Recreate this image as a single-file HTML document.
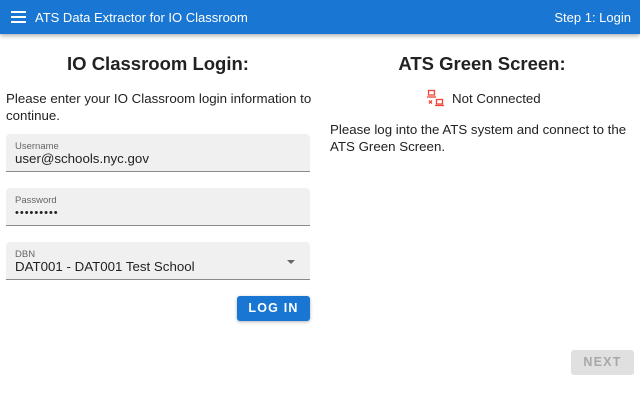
<!DOCTYPE html>
<html><head><style>
*{margin:0;padding:0;box-sizing:border-box}
body{width:640px;height:400px;background:#fff;font-family:"Liberation Sans",sans-serif;color:#222;position:relative;overflow:hidden}
.hdr{position:absolute;left:0;top:0;width:640px;height:34px;background:#1976d2;box-shadow:0 2px 4px rgba(0,0,0,.3);color:#fff;font-size:13px}
.abs{position:absolute}
h2{position:absolute;font-size:18.5px;font-weight:bold;text-align:center;color:#222}
.p{position:absolute;font-size:13.3px;line-height:17px}
.f{position:absolute;left:6px;width:304px;height:38px;background:#f0f0f0;border-bottom:1px solid #8a8a8a;border-radius:4px 4px 0 0}
.f .l{position:absolute;left:9px;top:7px;font-size:9.5px;color:#666}
.f .v{position:absolute;left:9px;top:17px;font-size:13.3px;color:#222}
.btn{position:absolute;border-radius:3px;font-size:12.5px;font-weight:bold;letter-spacing:1.2px;text-align:center}
</style></head><body>
<div class="hdr">
 <div class="abs" style="left:11px;top:11px;width:15px;height:2px;background:#fff"></div>
 <div class="abs" style="left:11px;top:16px;width:15px;height:2px;background:#fff"></div>
 <div class="abs" style="left:11px;top:21px;width:15px;height:2px;background:#fff"></div>
 <div class="abs" style="left:35px;top:10px">ATS Data Extractor for IO Classroom</div>
 <div class="abs" style="right:9px;top:10px">Step 1: Login</div>
</div>
<h2 style="left:6px;width:304px;top:53px">IO Classroom Login:</h2>
<div class="p" style="left:6px;top:90px;width:312px">Please enter your IO Classroom login information to continue.</div>
<div class="f" style="top:134px"><div class="l">Username</div><div class="v">user@schools.nyc.gov</div></div>
<div class="f" style="top:188px"><div class="l">Password</div><div class="v" style="letter-spacing:1px;font-size:11px;top:19px">•••••••••</div></div>
<div class="f" style="top:242px"><div class="l">DBN</div><div class="v">DAT001 - DAT001 Test School</div>
 <div class="abs" style="left:281px;top:18px;width:0;height:0;border-left:4px solid transparent;border-right:4px solid transparent;border-top:4px solid #666"></div></div>
<div class="btn" style="left:237px;top:296px;width:73px;height:25px;line-height:25px;background:#1976d2;color:#fff;box-shadow:0 1px 3px rgba(0,0,0,.3)">LOG IN</div>
<h2 style="left:330px;width:304px;top:53px">ATS Green Screen:</h2>
<svg class="abs" style="left:426px;top:89px" width="20" height="18" viewBox="0 0 20 18" fill="none" stroke="#f44336" stroke-width="1.3">
 <rect x="2.5" y="1.5" width="6" height="4.5"/><line x1="1" y1="8" x2="10" y2="8"/>
 <rect x="10.5" y="10.5" width="6" height="4.5"/><line x1="9" y1="16.5" x2="18" y2="16.5"/>
 <path d="M3 11.5l3 3M6 11.5l-3 3"/>
</svg>
<div class="p" style="left:452px;top:90px">Not Connected</div>
<div class="p" style="left:330px;top:121px;width:305px">Please log into the ATS system and connect to the ATS Green Screen.</div>
<div class="btn" style="left:571px;top:350px;width:63px;height:25px;line-height:25px;background:#e0e0e0;color:#a8a8a8">NEXT</div>
</body></html>
